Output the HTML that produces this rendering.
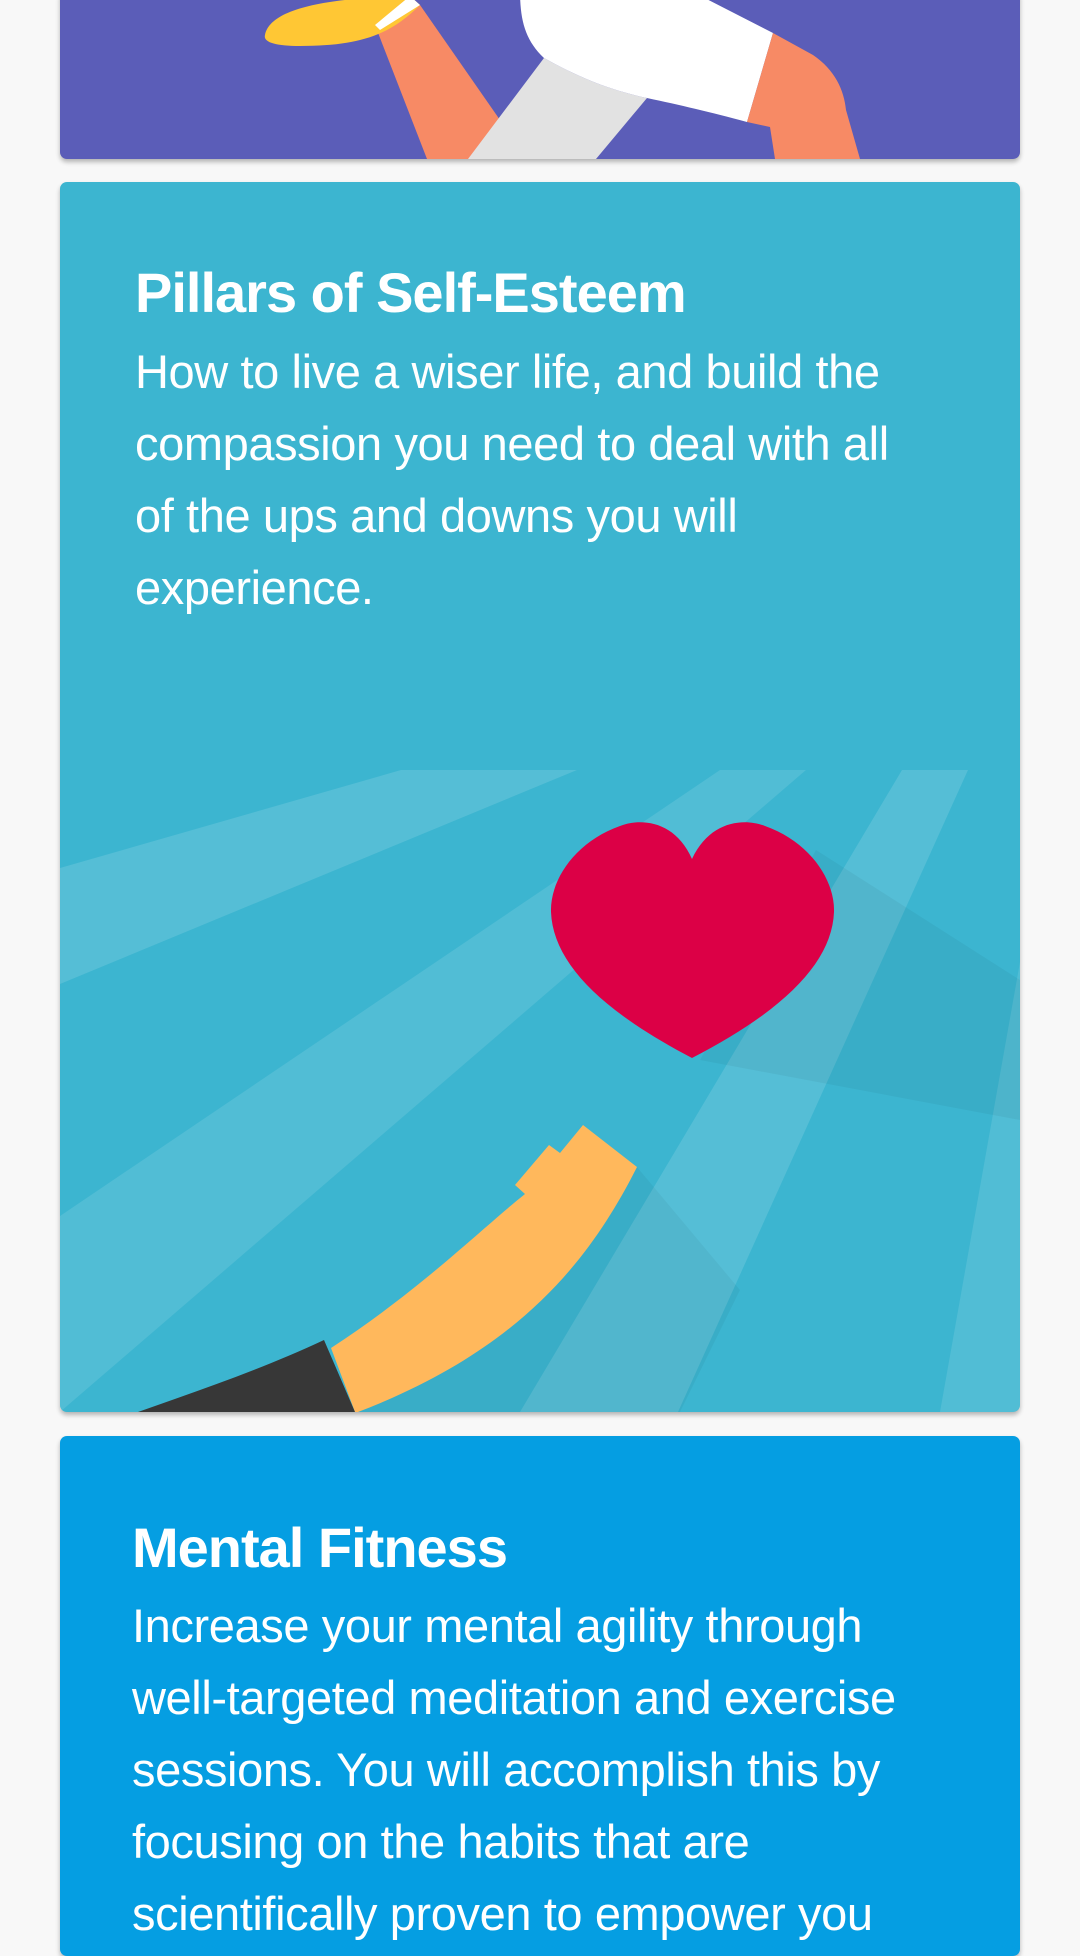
<!DOCTYPE html>
<html><head><meta charset="utf-8"><style>
html,body{margin:0;padding:0;}
body{width:1080px;height:1920px;background:#f8f8f8;position:relative;overflow:hidden;font-family:"Liberation Sans",sans-serif;color:#fff;}
.card{position:absolute;left:60px;width:960px;border-radius:7px;overflow:hidden;box-shadow:0 3px 5px rgba(0,0,0,0.28);}
.t{position:absolute;font-weight:bold;font-size:56px;line-height:64px;letter-spacing:-1px;white-space:nowrap;}
.b{position:absolute;font-size:47px;line-height:72px;white-space:nowrap;letter-spacing:-0.4px;}
</style></head><body>
<div class="card" style="top:-10px;height:169px;background:#5b5db8;">
<svg width="960" height="169" viewBox="60 -10 960 169" style="position:absolute;left:0;top:0">
<polygon points="375,25 420,5 500,120 485,159 427,159" fill="#f78a65"/>
<path d="M544,58 C580,78 610,90 647,98 L596,159 L468,159 Z" fill="#e2e2e2"/>
<path d="M520,-10 L689,-10 L773,33 L747,122 C710,112 680,105 647,98 C610,90 580,78 544,58 C525,40 520,20 520,-10Z" fill="#fff"/>
<path d="M773,33 L813,55 C835,70 844,90 846,110 L860,159 L775,159 L770,127 L747,122Z" fill="#f78a65"/>
<path d="M265,35 C270,10 320,-2 410,-4 L420,5 C390,35 360,46 300,46 C275,46 263,42 265,35Z" fill="#ffc734"/>
<path d="M410,-4 L420,5 L380,30 L375,25Z" fill="#fff"/>
</svg>
</div>
<div class="card" style="top:182px;height:1230px;background:#3cb5d0;">
<svg width="960" height="1230" viewBox="60 182 960 1230" style="position:absolute;left:0;top:0">
<polygon points="401,770 577,770 60,984 60,868" fill="#fff" opacity="0.13"/>
<polygon points="720,770 806,770 60,1412 60,1216" fill="#fff" opacity="0.11"/>
<polygon points="902,770 968,770 678,1412 520,1412" fill="#fff" opacity="0.13"/>
<polygon points="1020,962 940,1412 1020,1412" fill="#fff" opacity="0.11"/>
<polygon points="816,850 1020,980 1020,1120 700,1060" fill="#000" opacity="0.045"/>
<polygon points="637,1167 740,1290 680,1412 358,1412" fill="#000" opacity="0.04"/>
<path d="M692,859 C675,820 640,818 620,826 C575,842 550,880 551,912 C553,962 600,1010 692,1058 C785,1010 832,962 834,912 C835,880 810,842 765,826 C745,818 710,820 692,859Z" fill="#dc0046"/>
<path d="M583,1125 L637,1167 C590,1260 520,1350 358,1412 L355,1412 L331,1348 C420,1290 480,1230 525,1194 L515,1185 L549,1145 L560,1153 Z" fill="#ffb85c"/>
<path d="M324,1340 L355,1412 L138,1412 C200,1390 260,1370 324,1340Z" fill="#373737"/>
</svg>
<div class="t" style="left:75px;top:79px;">Pillars of Self-Esteem</div>
<div class="b" style="left:75px;top:154px;">How to live a wiser life, and build the<br>compassion you need to deal with all<br>of the ups and downs you will<br>experience.</div>
</div>
<div class="card" style="top:1436px;height:520px;background:#059ee2;">
<div class="t" style="left:72px;top:80px;">Mental Fitness</div>
<div class="b" style="left:72px;top:154px;">Increase your mental agility through<br>well-targeted meditation and exercise<br>sessions. You will accomplish this by<br>focusing on the habits that are<br>scientifically proven to empower you</div>
</div>
</body></html>
